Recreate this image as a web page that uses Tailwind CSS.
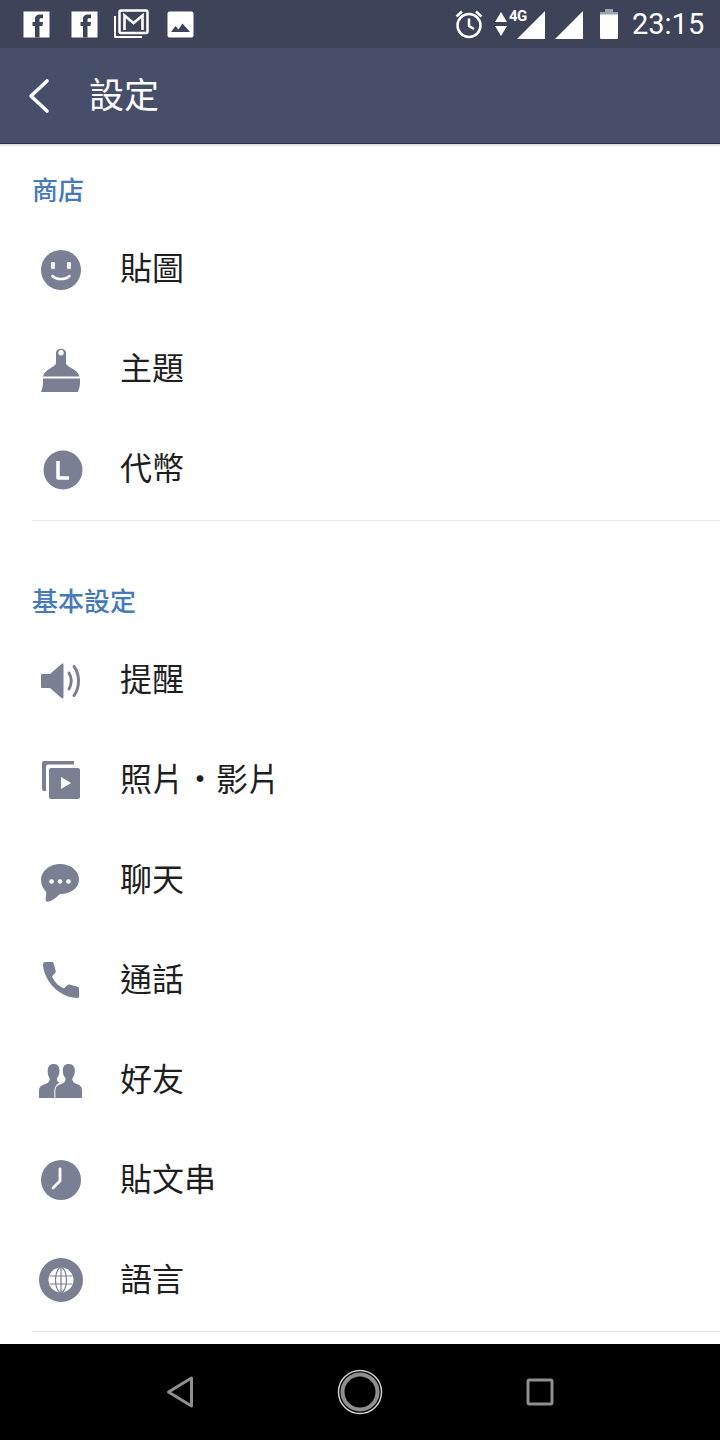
<!DOCTYPE html>
<html lang="zh-Hant">
<head>
  <meta charset="UTF-8" />
  <meta name="viewport" content="width=device-width, initial-scale=1.0"/>
  <title>設定</title>
  <script src="https://cdn.jsdelivr.net/npm/@tailwindcss/browser@4"></script>
</head>
<body class="bg-white font-['Noto_Sans_CJK_TC','Noto_Sans',sans-serif]">
<div class="w-[720px] h-[1440px] flex flex-col overflow-hidden">

  <!-- status bar -->
  <div class="h-[48px] bg-[#3e4359] flex items-center text-white shrink-0">
    <div class="flex items-center pl-[23px] flex-1">
      <svg class="w-[27px] h-[27px]" viewBox="0 0 27 27"><rect x=".5" y=".5" width="26" height="26" fill="#fff"/><path fill="#3e4359" d="M12 26.500V15H9.500v-4H12V8c0-3 1.700-4.500 4.500-4.500H20v3.700h-2c-1 0-1.500.5-1.500 1.500V11h3.500l-.5 4h-3v11.500z"/></svg>
      <svg class="w-[27px] h-[27px] ml-[21px]" viewBox="0 0 27 27"><rect x=".5" y=".5" width="26" height="26" fill="#fff"/><path fill="#3e4359" d="M12 26.500V15H9.500v-4H12V8c0-3 1.700-4.500 4.500-4.500H20v3.700h-2c-1 0-1.500.5-1.500 1.500V11h3.500l-.5 4h-3v11.500z"/></svg>
      <svg class="w-[36px] h-[30px] ml-[15px]" viewBox="0 0 36 30"><path fill="none" stroke="#fff" stroke-width="2" d="M2 7v20.500a.5.500 0 0 0 .5.500H29"/><rect x="6.500" y="1.500" width="28" height="22.500" rx="1.500" fill="none" stroke="#fff" stroke-width="2.500"/><path fill="none" stroke="#fff" stroke-width="2.600" d="M11.500 21V6.500l9 7.500 9-7.500V21"/></svg>
      <svg class="w-[27px] h-[27px] ml-[18px]" viewBox="0 0 27 27"><rect x=".5" y=".5" width="26" height="26" rx="2" fill="#fff"/><path fill="#3e4359" d="M4 21l4.500-6 3 3.500 4-6 7.500 8.500z"/></svg>
    </div>
    <div class="flex items-center pr-[16px]">
      <svg class="w-[30px] h-[30px]" viewBox="0 0 30 30"><circle cx="14" cy="16.500" r="11.500" fill="none" stroke="#fff" stroke-width="2.500"/><path fill="none" stroke="#fff" stroke-width="2.500" d="M14 9.500v7.500l5 3M1.500 7.500l5.500-5M26.500 7.500l-5.500-5"/></svg>
      <svg class="w-[14px] h-[26px] ml-[9px]" viewBox="0 0 14 26"><path fill="#fff" d="M7 1l6 10H1zM1 15h12L7 25z"/></svg>
      <div class="relative w-[36px] h-[30px] ml-[1px]">
        <svg class="absolute inset-0" width="36" height="30" viewBox="0 0 36 30"><path fill="#fff" d="M36 2v28H8z"/></svg>
        <span class="absolute left-[0px] top-[-1px] text-[15px] leading-[16px] font-bold font-['Roboto'] tracking-[-0.5px]">4G</span>
      </div>
      <svg class="w-[28px] h-[28px] ml-[10px] mt-[2px]" viewBox="0 0 28 28"><path fill="#fff" d="M28 0v28H0z"/></svg>
      <svg class="w-[18px] h-[30px] ml-[17px]" viewBox="0 0 18 30"><path fill="#fff" fill-opacity=".5" d="M5 0h8v3h5v6H0V3h5z"/><path fill="#fff" d="M0 5.500h18V28.500a1.500 1.500 0 0 1-1.500 1.500h-15A1.500 1.500 0 0 1 0 28.500z"/></svg>
      <span class="ml-[14px] text-[29px] leading-[34px] font-['Roboto'] w-[72px]">23:15</span>
    </div>
  </div>

  <!-- header -->
  <div class="h-[96px] bg-[#474e69] flex items-center border-b border-[#2c3148] shrink-0">
    <svg class="w-[24px] h-[36px] ml-[27px]" viewBox="0 0 24 36"><path fill="none" stroke="#fff" stroke-width="3.600" stroke-linecap="round" stroke-linejoin="round" d="M20 3L4 18l16 15"/></svg>
    <span class="ml-[38px] mb-[6px] text-[35px] leading-[40px] text-white">設定</span>
  </div>
  <div class="h-[3px] bg-gradient-to-b from-[#d8d8d8] to-white shrink-0"></div>

  <!-- list -->
  <div class="flex-1 flex flex-col">
    <div class="h-[72px] pl-[32px] pt-[24px] text-[26px] leading-[36px] font-medium text-[#4479bd]">商店</div>

    <div class="h-[100px] flex items-center">
      <div class="w-[120px] pl-[2px] flex justify-center">
        <svg class="w-[40px] h-[40px] mt-[2px]" viewBox="0 0 40 40"><circle cx="20" cy="20" r="20" fill="#7b7f94"/><rect x="10" y="12" width="4" height="7" rx="1" fill="#fff"/><rect x="26" y="12" width="4" height="7" rx="1" fill="#fff"/><path fill="none" stroke="#fff" stroke-width="2.500" stroke-linecap="round" d="M11.500 26c4 4 13 4 17 0"/></svg>
      </div>
      <span class="mb-[6px] text-[32px] leading-[40px] text-[#1f1f1f]">貼圖</span>
    </div>
    <div class="h-[100px] flex items-center">
      <div class="w-[120px] pl-[2px] flex justify-center">
        <svg class="w-[40px] h-[46px] mt-[1px]" viewBox="0 0 40 46"><path fill="#7b7f94" fill-rule="evenodd" d="M15 5a5.500 5.500 0 0 1 10 0v11c0 4 12 6 13.500 13.500H2C3.500 22 15 20 15 16zM20 3a2.800 2.800 0 1 0 .01 0zM2 31.500h37V36c0 4-1.500 7-2 9H0c1-3 2-6 2-9z"/></svg>
      </div>
      <span class="mb-[6px] text-[32px] leading-[40px] text-[#1f1f1f]">主題</span>
    </div>
    <div class="h-[100px] flex items-center">
      <div class="w-[120px] pl-[2px] flex justify-center">
        <svg class="w-[40px] h-[40px] ml-[3px] mt-[2px]" viewBox="0 0 40 40"><circle cx="20" cy="20" r="19.500" fill="#7b7f94"/><path fill="none" stroke="#fff" stroke-width="3.500" stroke-linejoin="round" d="M15 11v17h11"/></svg>
      </div>
      <span class="mb-[6px] text-[32px] leading-[40px] text-[#1f1f1f]">代幣</span>
    </div>
    <div class="ml-[32px] mt-[1px] h-[1px] bg-[#e6e6e6]"></div>

    <div class="h-[109px] pl-[32px] pt-[61px] text-[26px] leading-[36px] font-medium text-[#4479bd]">基本設定</div>

    <div class="h-[100px] flex items-center">
      <div class="w-[120px] pl-[2px] flex justify-center">
        <svg class="w-[42px] h-[36px] mt-[2px]" viewBox="0 0 42 36"><path fill="#7b7f94" d="M1 12a1 1 0 0 1 1-1h8L21.500 1c1-.8 2-.4 2 1v32c0 1.400-1 1.800-2 1L10 25H2a1 1 0 0 1-1-1z"/><path fill="none" stroke="#7b7f94" stroke-width="3" stroke-linecap="round" d="M29 10c3 4.500 3 11 0 16M34 3.500c6 8 6 21 0 29"/></svg>
      </div>
      <span class="mb-[6px] text-[32px] leading-[40px] text-[#1f1f1f]">提醒</span>
    </div>
    <div class="h-[100px] flex items-center">
      <div class="w-[120px] pl-[2px] flex justify-center">
        <svg class="w-[38px] h-[38px]" viewBox="0 0 38 38"><path fill="#7b7f94" d="M2 0h30v3.500H6a2 2 0 0 0-2 2V30H2a2 2 0 0 1-2-2V2a2 2 0 0 1 2-2z"/><rect x="7" y="7" width="31" height="31" rx="2" fill="#7b7f94"/><path fill="#fff" d="M19 16l10 6-10 6z"/></svg>
      </div>
      <span class="mb-[6px] text-[32px] leading-[40px] text-[#1f1f1f]">照片・影片</span>
    </div>
    <div class="h-[100px] flex items-center">
      <div class="w-[120px] pl-[2px] flex justify-center">
        <svg class="w-[38px] h-[38px] mr-[2px] mt-[6px]" viewBox="0 0 38 38"><path fill="#7b7f94" d="M19 0c10.500 0 19 6.800 19 15.500S29.500 30 19 30c-3 2.800-7.500 7-12.500 7.800C5 38 4.500 36 4.500 35c.5-2 .8-5 .7-7C2.200 25 0 21 0 16 0 7 8.500 0 19 0z"/><circle cx="10.500" cy="17.500" r="2.300" fill="#fff"/><circle cx="19" cy="17.500" r="2.300" fill="#fff"/><circle cx="27.500" cy="17.500" r="2.300" fill="#fff"/></svg>
      </div>
      <span class="mb-[6px] text-[32px] leading-[40px] text-[#1f1f1f]">聊天</span>
    </div>
    <div class="h-[100px] flex items-center">
      <div class="w-[120px] pl-[2px] flex justify-center">
        <svg class="w-[36px] h-[36px]" viewBox="0 0 36 36"><path fill="#7b7f94" d="M2 0h7c1 0 1.500.6 1.700 1.500l2 7.500c.2 1 0 1.600-.7 2.300L9 14.500c2 5 6.500 9.500 12 12l3.200-3.300c.7-.7 1.500-.8 2.300-.6l8 2.200c1 .3 1.500 1 1.500 2V35c0 .6-.5 1-1 1C17 36 2 20 0 4c-.2-2 .5-4 2-4z"/></svg>
      </div>
      <span class="mb-[6px] text-[32px] leading-[40px] text-[#1f1f1f]">通話</span>
    </div>
    <div class="h-[100px] flex items-center">
      <div class="w-[120px] pl-[2px] flex justify-center">
        <svg class="w-[43px] h-[35px] mr-[1px]" viewBox="0 0 42 34"><path fill="#7b7f94" d="M14.500 1c4 0 5.500 3 5.500 6.500 0 3-1 5.500-2.500 7.500 0 2 .5 3 2.500 4-2.500 1.500-5 4.500-5 8.500V34H0v-7c0-4 3-5.500 6-6.500 3-1 4.500-2.500 4.500-5.500C9 13 8.500 10.500 8.500 7.500 8.500 3.500 10.500 1 14.500 1z"/><path fill="#7b7f94" d="M29 1c4.500 0 6 3 6 6.500 0 3-.8 5.500-2.500 7.500 0 3 1.500 4.500 4.500 5.500 3 1 5 2.500 5 6.500v7H16v-7c0-4 2.500-5.500 5.500-6.500 3-1 4.500-2.500 4.500-5.500-1.700-2-2.800-4.500-2.800-7.500C23.200 3.500 25 1 29 1z"/></svg>
      </div>
      <span class="mb-[6px] text-[32px] leading-[40px] text-[#1f1f1f]">好友</span>
    </div>
    <div class="h-[100px] flex items-center">
      <div class="w-[120px] pl-[2px] flex justify-center">
        <svg class="w-[40px] h-[40px]" viewBox="0 0 40 40"><circle cx="20" cy="20" r="20" fill="#7b7f94"/><path fill="none" stroke="#fff" stroke-width="2.800" stroke-linecap="round" stroke-linejoin="round" d="M19 9v12l-7 7"/></svg>
      </div>
      <span class="mb-[6px] text-[32px] leading-[40px] text-[#1f1f1f]">貼文串</span>
    </div>
    <div class="h-[100px] flex items-center">
      <div class="w-[120px] pl-[2px] flex justify-center">
        <svg class="w-[44px] h-[44px] mr-[1px]" viewBox="0 0 44 44"><circle cx="22" cy="22" r="22" fill="#7b7f94"/><circle cx="22" cy="22" r="12.500" fill="#fff"/><g fill="none" stroke="#7b7f94" stroke-width="1.200"><ellipse cx="22" cy="22" rx="5.500" ry="12.500"/><path d="M22 9.500v25M10.500 18h23M10.500 26h23"/></g></svg>
      </div>
      <span class="mb-[6px] text-[32px] leading-[40px] text-[#1f1f1f]">語言</span>
    </div>
    <div class="ml-[32px] mt-[1px] h-[1px] bg-[#e6e6e6]"></div>
  </div>

  <!-- android nav -->
  <div class="h-[96px] bg-black flex items-center justify-center gap-[142px] shrink-0">
    <svg class="w-[30px] h-[34px]" viewBox="0 0 30 34"><path fill="none" stroke="#8f8f8f" stroke-width="3" stroke-linejoin="round" d="M26.500 3v28L3.500 17z"/></svg>
    <svg class="w-[46px] h-[46px]" viewBox="0 0 46 46"><circle cx="23" cy="23" r="21.500" fill="none" stroke="#d0d0d0" stroke-width="1.500"/><circle cx="23" cy="23" r="17.500" fill="none" stroke="#8f8f8f" stroke-width="4"/></svg>
    <svg class="w-[30px] h-[30px]" viewBox="0 0 30 30"><rect x="3" y="3" width="24" height="24" rx="1.500" fill="none" stroke="#8f8f8f" stroke-width="3"/></svg>
  </div>
</div>
</body>
</html>
